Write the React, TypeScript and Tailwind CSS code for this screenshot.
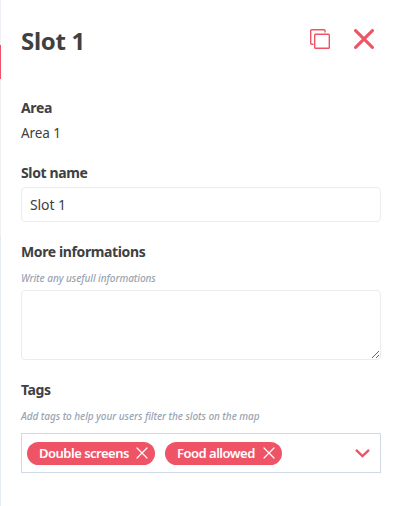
import React from "react";

function Label({ children }: { children: React.ReactNode }) {
  return <h2 className="h-5 whitespace-nowrap text-[14px] leading-5 font-bold tracking-[-0.38px]">{children}</h2>;
}

function Hint({ children }: { children: React.ReactNode }) {
  return (
    <p className="h-4 whitespace-nowrap text-[10px] leading-4 font-medium tracking-[-0.07px] text-[#9aa4b3] italic">
      {children}
    </p>
  );
}

function Tag({ label, width }: { label: string; width: string }) {
  return (
    <span className={`flex h-[23px] items-center justify-between rounded-full bg-[#ef5466] pr-[7px] pl-3 text-white ${width}`}>
      <span className="pt-px text-[13px] leading-[23px] font-semibold tracking-[-0.5px] whitespace-nowrap">{label}</span>
      <svg width="12" height="12" viewBox="0 0 12 12" fill="none" stroke="currentColor" strokeWidth="1.2" strokeLinecap="round">
        <path d="M1 1l10 10M11 1L1 11" />
      </svg>
    </span>
  );
}

export default function App() {
  return (
    <div className="flex h-[506px] w-[401px] bg-white font-['Noto_Sans',sans-serif] text-[#404040]">
      <div className="flex w-px shrink-0 flex-col">
        <i className="h-[45px] bg-[#f1f0f6]" />
        <i className="h-[34px] bg-[#ef5466]" />
        <i className="h-[156px] bg-[#f1f1f3]" />
        <i className="flex-1 bg-[#e1edf2]" />
      </div>
      <main className="flex w-[400px] flex-col pr-5 pl-5">
        <header className="flex h-[98px] justify-between">
          <h1 className="mt-[25px] h-8 text-[24px] leading-8 font-bold tracking-[-0.3px] whitespace-nowrap">Slot 1</h1>
          <div className="mt-[29px] mr-[7px] flex gap-6 text-[#ef5466]">
            <svg width="20" height="20" viewBox="0 0 20 20" fill="none" stroke="currentColor" strokeWidth="1.4" strokeLinejoin="round" strokeLinecap="round">
              <rect x="4.7" y="5.2" width="14.6" height="14.1" rx="0.8" />
              <path d="M15 3V1.6Q15 .7 14.1.7H1.6Q.7.7.7 1.6V14.3Q.7 15.2 1.6 15.2H3" />
            </svg>
            <svg width="20" height="20" viewBox="0 0 20 20" fill="none" stroke="currentColor" strokeWidth="3.1" strokeLinecap="round">
              <path d="M1.6 1.6l16.8 16.8M18.4 1.6L1.6 18.4" />
            </svg>
          </div>
        </header>
        <Label>Area</Label>
        <p className="mt-[5px] h-5 text-[13.5px] leading-5 tracking-[-0.1px]">Area 1</p>
        <div className="mt-5">
          <Label>Slot name</Label>
          <input
            defaultValue="Slot 1"
            className="mt-1 block h-[35px] w-full rounded border border-[#ececec] px-2 text-[14px] leading-5 tracking-[-0.1px] outline-none"
          />
        </div>
        <div className="mt-5">
          <Label>More informations</Label>
          <div className="mt-2">
            <Hint>Write any usefull informations</Hint>
          </div>
          <textarea className="mt-1 block h-[70px] w-full rounded border border-[#ececec] px-2 outline-none" />
        </div>
        <div className="mt-5">
          <Label>Tags</Label>
          <div className="mt-2">
            <Hint>Add tags to help your users filter the slots on the map</Hint>
          </div>
          <div className="mt-[9px] flex h-10 items-center border border-[#d1d9e6] pr-[10px] pl-[5px]">
            <Tag label="Double screens" width="w-[128px]" />
            <span className="w-[10px]" />
            <Tag label="Food allowed" width="w-[117px]" />
            <svg className="ml-auto text-[#ef5466]" width="15" height="9" viewBox="0 0 15 9" fill="none" stroke="currentColor" strokeWidth="2.4">
              <path d="M1 .9l6.5 6.2L14 .9" />
            </svg>
          </div>
        </div>
      </main>
    </div>
  );
}
